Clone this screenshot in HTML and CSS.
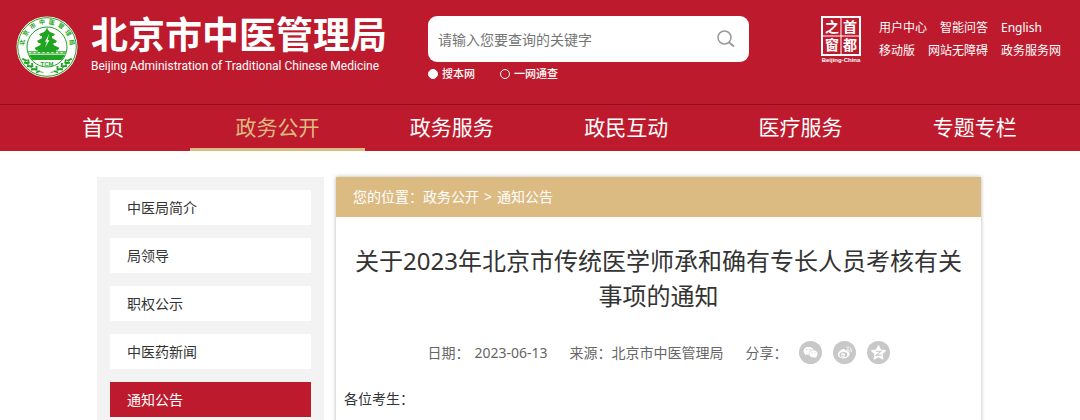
FILE: index.html
```html
<!DOCTYPE html>
<html lang="zh-CN">

<head>
  <meta charset="UTF-8">
  <meta name="viewport" content="width=device-width, initial-scale=1.0">
  <title>北京市中医管理局</title>
  <link rel="stylesheet" href="styles.css">
</head>

<body>
  <header class="header">
    <div class="top">
      <a class="logo" href="#">
        <svg class="emblem" viewBox="0 0 62 62" aria-hidden="true">
          <defs>
            <path id="ring" d="M9.500 39 A23 23 0 1 1 52.500 39" />
            <clipPath id="inner"><circle cx="31" cy="31" r="19.5" /></clipPath>
          </defs>
          <circle cx="31" cy="31" r="30.5" fill="#fff" />
          <circle cx="31" cy="31" r="29.3" fill="none" stroke="#1fa51f" stroke-width="1" />
          <circle cx="31" cy="31" r="20" fill="none" stroke="#1fa51f" stroke-width="1" />
          <text class="ring-text"><textPath href="#ring" startOffset="50%" text-anchor="middle">北&#160;&#160;京&#160;&#160;市&#160;&#160;中&#160;&#160;医&#160;&#160;管&#160;&#160;理&#160;&#160;局</textPath></text>
          <g fill="#1fa51f" clip-path="url(#inner)">
            <path d="M31 11l1 3 2 2 5 2-1.500 2h-1.500v2l5 3-1.500 2h-2v2l6 3-2 2.500h-1.500v2h-18v-2h-1.500l-2-2.500 6-3v-2h-2L21 25l5-3v-2h-1.500L23 18l5-2 2-2z" />
            <path d="M10 35h42v3.500H10z" opacity=".7" />
            <path d="M10 39h42v5H10z" />
          </g>
          <path d="M33 18l-4 8 2-.5-2 6 4.500-7.500-2 .5z" fill="#fff" />
          <path d="M13 36.700h36" stroke="#fff" stroke-width="1" stroke-dasharray="2 2.500" />
          <text class="tcm" x="31" y="50" text-anchor="middle">TCM</text>
          <g fill="none" stroke="#1fa51f" stroke-width="1.800">
            <path d="M7.500 42c3 7 10 13 20 14.500" stroke-width=".8" />
            <path d="M54.500 42c-3 7-10 13-20 14.500" stroke-width=".8" />
            <path d="M6 43l5 1.500M8 46.500l5 1M11 50l5 .5M15 53.500l5-.5M20 56.500l4-1.500M12 43.500l1 4M16 47l.5 4M20.500 50l0 4" />
            <path d="M56 43l-5 1.500M54 46.500l-5 1M51 50l-5 .5M47 53.500l-5-.5M42 56.500l-4-1.500M50 43.500l-1 4M46 47l-.5 4M41.500 50l0 4" />
          </g>
        </svg>
        <span class="logo-text">
          <strong class="name-cn">北京市中医管理局</strong>
          <span class="name-en">Beijing Administration of Traditional Chinese Medicine</span>
        </span>
      </a>

      <form class="search">
        <div class="search-bar">
          <input type="text" class="search-input" placeholder="请输入您要查询的关键字" aria-label="关键字">
          <button type="button" class="search-btn" aria-label="搜索">
            <svg viewBox="0 0 18 18" width="18" height="18" fill="none" stroke="#999" stroke-width="1.500">
              <circle cx="7.500" cy="7.500" r="6.500" />
              <path d="M11.500 12l5.500 4.500" stroke-width="2" />
            </svg>
          </button>
        </div>
        <div class="scope">
          <label><input type="radio" name="scope" checked>搜本网</label>
          <label><input type="radio" name="scope">一网通查</label>
        </div>
      </form>

      <div class="tools">
        <a class="seal" href="#">
          <svg viewBox="0 0 40 48" width="40" height="48">
            <path d="M0 0h40v40H0z" fill="#fff" />
            <path d="M2 2h17.500v17.500H2zM20.500 2H38v17.500H20.500zM2 20.500h17.500V38H2zM20.500 20.500H38V38H20.500z" fill="#bd1b2d" />
            <g class="seal-char">
              <text x="11" y="16">之</text>
              <text x="29" y="16">首</text>
              <text x="11" y="34">窗</text>
              <text x="29" y="34">都</text>
            </g>
            <text class="seal-en" x="20" y="46">Beijing-China</text>
          </svg>
        </a>
        <div class="links">
          <div class="links-row">
            <a href="#">用户中心</a>
            <a href="#">智能问答</a>
            <a href="#">English</a>
          </div>
          <div class="links-row">
            <a href="#">移动版</a>
            <a href="#">网站无障碍</a>
            <a href="#">政务服务网</a>
          </div>
        </div>
      </div>
    </div>

    <nav class="nav">
      <a href="#">首页</a>
      <a href="#" class="active">政务公开</a>
      <a href="#">政务服务</a>
      <a href="#">政民互动</a>
      <a href="#">医疗服务</a>
      <a href="#">专题专栏</a>
    </nav>
  </header>

  <div class="container">
    <aside class="sidebar">
      <a href="#">中医局简介</a>
      <a href="#">局领导</a>
      <a href="#">职权公示</a>
      <a href="#">中医药新闻</a>
      <a href="#" class="active">通知公告</a>
    </aside>

    <main class="article">
      <div class="crumb">
        <span>您的位置：<a href="#">政务公开</a></span>
        <span>&gt;</span>
        <a href="#">通知公告</a>
      </div>
      <h1>关于2023年北京市传统医学师承和确有专长人员考核有关事项的通知</h1>
      <div class="meta">
        <span class="date"><span>日期：</span><span>2023-06-13</span></span>
        <span>来源：北京市中医管理局</span>
        <div class="share">
          <span>分享：</span>
          <a href="#" aria-label="微信">
            <svg viewBox="0 0 23 23">
              <circle cx="11.500" cy="11.500" r="11.500" fill="#c8c8c8" />
              <path d="M9.500 6C6.500 6 4.500 7.800 4.500 10c0 1.300.7 2.300 1.700 3l-.5 1.600 1.900-1c.7.2 1.200.3 1.900.3h.4c-.8-3 1.700-5.300 4.700-5.200C14.100 7 12 6 9.500 6z" fill="#fff" />
              <path d="M14.500 9.300c-2.500 0-4.300 1.600-4.300 3.600s1.800 3.600 4.300 3.600c.5 0 1-.1 1.500-.2l1.500.8-.4-1.400c1-.7 1.600-1.700 1.600-2.800 0-2-1.900-3.600-4.200-3.600z" fill="#fff" />
              <g fill="#c8c8c8">
                <circle cx="7.800" cy="8.800" r=".7" />
                <circle cx="11.200" cy="8.800" r=".7" />
                <circle cx="13.100" cy="11.800" r=".6" />
                <circle cx="16" cy="11.800" r=".6" />
              </g>
            </svg>
          </a>
          <a href="#" aria-label="微博">
            <svg viewBox="0 0 23 23">
              <circle cx="11.500" cy="11.500" r="11.500" fill="#c8c8c8" />
              <path d="M9.800 8.200c1-.4 2.300-.4 2.200 1.400 1.500-.6 3.300-.5 2.700 1.200 1.300.4 1.900 1.100 1.900 2.200 0 2.300-2.900 4.500-6.300 4.500-3 0-5.500-1.500-5.500-3.900 0-2.200 2.700-4.700 5-5.400z" fill="#fff" />
              <ellipse cx="10.400" cy="13.700" rx="4" ry="2.700" fill="#c8c8c8" transform="rotate(-8 10.400 13.700)" />
              <circle cx="10" cy="14" r="1.900" fill="#fff" />
              <circle cx="9.700" cy="14.300" r=".8" fill="#c8c8c8" />
              <path d="M14 8.300c1.500-.3 2.500.7 2.100 2.200M13.800 6.200c3-.6 5.100 1.700 4.300 4.600" fill="none" stroke="#fff" stroke-width="1" stroke-linecap="round" />
            </svg>
          </a>
          <a href="#" aria-label="QQ空间">
            <svg viewBox="0 0 23 23">
              <circle cx="11.500" cy="11.500" r="11.500" fill="#c8c8c8" />
              <path d="M11.500 4.500l2.200 4.500 5 .7-3.600 3.500.9 5-4.500-2.400-4.500 2.400.9-5-3.600-3.500 5-.7z" fill="#fff" stroke="#fff" stroke-linejoin="round" />
              <path d="M8.800 10.300h5l-4.600 3.800h5.300" fill="none" stroke="#c8c8c8" stroke-width="1.100" />
            </svg>
          </a>
        </div>
      </div>
      <p>各位考生：</p>
    </main>
  </div>
</body>

</html>
```
FILE: styles.css
```css
* {
  box-sizing: border-box;
}

body {
  margin: 0;
  font-family: "Noto Sans", "Noto Sans CJK SC", sans-serif;
  font-size: 14px;
  color: #333;
  background: #fff;
}

a {
  color: inherit;
  text-decoration: none;
}

svg {
  display: block;
}

.header {
  background: #bd1b2d;
  color: #fff;
}

.top {
  display: flex;
  align-items: flex-start;
  min-height: 104px;
  padding: 16px 19px 0 16px;
}

.logo {
  display: flex;
  flex: 0 0 412px;
  gap: 13px;
}

.emblem {
  width: 62px;
  height: 62px;
}

.ring-text {
  font-size: 6px;
  font-weight: bold;
  fill: #1fa51f;
}

.tcm {
  font-family: "Liberation Sans", sans-serif;
  font-size: 6px;
  font-weight: bold;
  fill: #1fa51f;
}

.logo-text {
  display: flex;
  flex-direction: column;
  white-space: nowrap;
}

.name-cn {
  font-family: "Liberation Sans", "Noto Sans CJK SC", sans-serif;
  font-size: 37px;
  font-weight: 700;
  line-height: 42px;
}

.name-en {
  font-family: Roboto, sans-serif;
  font-size: 12px;
  line-height: 16px;
}

.search {
  flex: 0 1 321px;
}

.search-bar {
  display: flex;
  align-items: center;
  height: 46px;
  padding: 0 14px 0 10px;
  background: #fff;
  border-radius: 9px;
}

.search-input {
  flex: 1;
  min-width: 0;
  padding: 0;
  border: none;
  outline: none;
  background: transparent;
  font-family: inherit;
  font-size: 14px;
}

.search-input::placeholder {
  color: #757575;
}

.search-btn {
  padding: 0;
  border: none;
  background: transparent;
  cursor: pointer;
}

.scope {
  display: flex;
  gap: 25px;
  margin-top: 4px;
  font-size: 11px;
  font-weight: 500;
  line-height: 16px;
}

.scope label {
  display: flex;
  align-items: center;
  gap: 4px;
}

.scope input {
  appearance: none;
  width: 10px;
  height: 10px;
  margin: 0;
  border: 1px solid #fff;
  border-radius: 50%;
}

.scope input:checked {
  background: #fff;
}

.tools {
  display: flex;
  gap: 18px;
  margin-left: auto;
}

.seal-char {
  font-size: 14px;
  font-weight: bold;
  fill: #fff;
  text-anchor: middle;
}

.seal-en {
  font-family: "Liberation Sans", sans-serif;
  font-size: 6px;
  font-weight: bold;
  fill: #fff;
  text-anchor: middle;
}

.links {
  font-size: 12px;
  line-height: 23px;
}

.links-row {
  display: flex;
  gap: 13px;
  white-space: nowrap;
}

.nav {
  display: flex;
  padding: 0 18px 0 16px;
  border-top: 1px solid #8f1020;
}

.nav a {
  flex: 1;
  height: 46px;
  border-bottom: 3px solid transparent;
  font-size: 21px;
  line-height: 44px;
  text-align: center;
}

.nav .active {
  color: #dcbb83;
  border-color: #dcbb83;
}

.container {
  display: grid;
  grid-template-columns: 227px 1fr;
  gap: 12px;
  padding: 26px 99px 0 97px;
}

.sidebar {
  display: flex;
  flex-direction: column;
  gap: 13px;
  padding: 13px;
  background: #f3f3f3;
}

.sidebar a {
  padding: 0 17px;
  background: #fff;
  line-height: 35px;
}

.sidebar .active {
  background: #bd1b2d;
  color: #fff;
}

.article {
  box-shadow: 0 0 4px rgba(0, 0, 0, 0.3);
}

.crumb {
  display: flex;
  gap: 5px;
  padding: 0 17px;
  background: #dcbb83;
  color: #fff;
  line-height: 40px;
}

h1 {
  margin: 26px 8px 0;
  font-size: 24px;
  font-weight: 400;
  line-height: 35px;
  text-align: center;
}

.meta {
  display: flex;
  align-items: center;
  justify-content: center;
  gap: 22px;
  margin-top: 28px;
  color: #666;
  line-height: 24px;
}

.date {
  display: flex;
  gap: 5px;
}

.share {
  display: flex;
  gap: 11px;
}

.share svg {
  width: 23px;
  height: 23px;
}

.article p {
  margin: 20px 8px 0;
  line-height: 28px;
}
```
